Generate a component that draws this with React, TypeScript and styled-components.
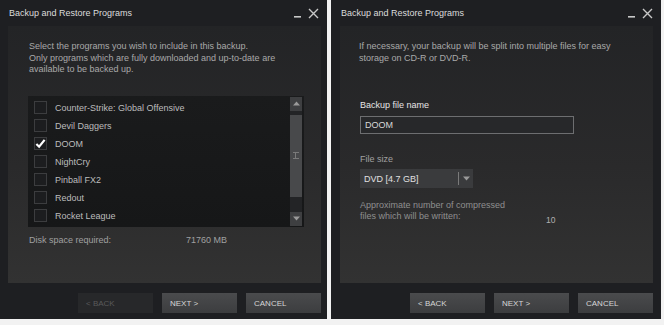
import styled, { createGlobalStyle } from "styled-components";

const GlobalStyle = createGlobalStyle`
  html, body {
    margin: 0;
    padding: 0;
    background: #f2f2f2;
    font-family: "Liberation Sans", Arial, sans-serif;
  }
`;

const games = [
  { name: "Counter-Strike: Global Offensive", checked: false },
  { name: "Devil Daggers", checked: false },
  { name: "DOOM", checked: true },
  { name: "NightCry", checked: false },
  { name: "Pinball FX2", checked: false },
  { name: "Redout", checked: false },
  { name: "Rocket League", checked: false },
];

const WindowControls = () => (
  <Controls>
    <svg width="10" height="10" viewBox="0 0 10 10">
      <rect x="1" y="8" width="7" height="1.6" fill="#c8c8c8" />
    </svg>
    <svg width="11" height="11" viewBox="0 0 11 11">
      <path d="M1 1 L10 10 M10 1 L1 10" stroke="#c8c8c8" strokeWidth="1.4" />
    </svg>
  </Controls>
);

const Check = () => (
  <svg width="11" height="11" viewBox="0 0 12 12">
    <path d="M1.5 6.5 L4.5 9.5 L10.5 2" stroke="#ffffff" strokeWidth="2.4" fill="none" />
  </svg>
);

const Arrow = ({ down }: { down?: boolean }) => (
  <svg width="7" height="5" viewBox="0 0 7 5">
    <path d={down ? "M0 0.5 L7 0.5 L3.5 4.5 Z" : "M0 4.5 L7 4.5 L3.5 0.5 Z"} fill="#9a9a9a" />
  </svg>
);

export default function App() {
  return (
    <Page>
      <GlobalStyle />
      <Window $width={327}>
        <TitleBar $pad={9}>
          <Title>Backup and Restore Programs</Title>
          <WindowControls />
        </TitleBar>
        <Panel $left={8} $right={6}>
          <Description $top={15} $pad={21}>
            Select the programs you wish to include in this backup.
            <br />
            Only programs which are fully downloaded and up-to-date are
            <br />
            available to be backed up.
          </Description>
          <ListBox>
            <Rows>
              {games.map((g) => (
                <Row key={g.name}>
                  <Box>{g.checked && <Check />}</Box>
                  <RowText>{g.name}</RowText>
                </Row>
              ))}
            </Rows>
            <ScrollBar>
              <ScrollButton>
                <Arrow />
              </ScrollButton>
              <Track>
                <Thumb>
                  <Grip />
                </Thumb>
              </Track>
              <ScrollButton>
                <Arrow down />
              </ScrollButton>
            </ScrollBar>
          </ListBox>
          <DiskRow>
            <DiskLabel>Disk space required:</DiskLabel>
            <span>71760 MB</span>
          </DiskRow>
        </Panel>
        <Footer $right={6}>
          <Button disabled>&lt; BACK</Button>
          <Button>NEXT &gt;</Button>
          <Button>CANCEL</Button>
        </Footer>
      </Window>

      <Window $width={330}>
        <TitleBar $pad={10}>
          <Title>Backup and Restore Programs</Title>
          <WindowControls />
        </TitleBar>
        <Panel $left={9} $right={8}>
          <Description $top={15} $pad={19}>
            If necessary, your backup will be split into multiple files for easy
            <br />
            storage on CD-R or DVD-R.
          </Description>
          <Form>
            <FieldLabel>Backup file name</FieldLabel>
            <TextInput>DOOM</TextInput>
            <SubLabel>File size</SubLabel>
            <Select>
              <SelectValue>DVD [4.7 GB]</SelectValue>
              <SelectArrow>
                <Arrow down />
              </SelectArrow>
            </Select>
            <Estimate>
              <EstimateText>
                Approximate number of compressed
                <br />
                files which will be written:
              </EstimateText>
              <EstimateValue>10</EstimateValue>
            </Estimate>
          </Form>
        </Panel>
        <Footer $right={8}>
          <Button>&lt; BACK</Button>
          <Button>NEXT &gt;</Button>
          <Button>CANCEL</Button>
        </Footer>
      </Window>
    </Page>
  );
}

const Page = styled.div`
  display: flex;
  gap: 4px;
  width: 664px;
  height: 325px;
`;

const Window = styled.div<{ $width: number }>`
  display: flex;
  flex-direction: column;
  width: ${({ $width }) => $width}px;
  height: 319px;
  background: #1e1f22;
  box-sizing: border-box;
`;

const TitleBar = styled.div<{ $pad: number }>`
  display: flex;
  align-items: center;
  justify-content: space-between;
  height: 26px;
  padding: 0 8px 0 ${({ $pad }) => $pad}px;
  flex-shrink: 0;
`;

const Title = styled.span`
  color: #dcdcdc;
  font-size: 9px;
`;

const Controls = styled.div`
  display: flex;
  align-items: center;
  gap: 5px;
`;

const Panel = styled.div<{ $left: number; $right: number }>`
  display: flex;
  flex-direction: column;
  height: 257px;
  margin: 0 ${({ $right }) => $right}px 0 ${({ $left }) => $left}px;
  background: linear-gradient(to bottom, #232426 0%, #2a2a2b 55%, #323232 100%);
  flex-shrink: 0;
`;

const Description = styled.div<{ $top: number; $pad: number }>`
  padding: ${({ $top }) => $top}px 0 0 ${({ $pad }) => $pad}px;
  color: #a9a9a9;
  font-size: 9px;
  line-height: 11.5px;
`;

const ListBox = styled.div`
  display: flex;
  margin: 20px 0 0 20px;
  width: 276px;
  height: 131px;
  background: linear-gradient(to bottom, #1a1b1c, #161718);
  box-sizing: border-box;
  padding: 1px 2px 1px 0;
`;

const Rows = styled.div`
  flex: 1;
  padding: 2px 0 0 6px;
`;

const Row = styled.div`
  display: flex;
  align-items: center;
  gap: 8px;
  height: 18px;
`;

const Box = styled.div`
  display: flex;
  align-items: center;
  justify-content: center;
  width: 11px;
  height: 11px;
  border: 1px solid #3c3d3f;
  background: #1c1d1f;
`;

const RowText = styled.span`
  color: #bcbcbc;
  font-size: 9px;
`;

const ScrollBar = styled.div`
  display: flex;
  flex-direction: column;
  width: 12px;
  background: #232426;
`;

const ScrollButton = styled.div`
  display: flex;
  align-items: center;
  justify-content: center;
  height: 14px;
  background: #3e3f41;
`;

const Track = styled.div`
  flex: 1;
  padding: 4px 0 15px;
`;

const Thumb = styled.div`
  display: flex;
  align-items: center;
  justify-content: center;
  height: 100%;
  background: #48494b;
`;

const Grip = styled.div`
  width: 6px;
  height: 5px;
  border-top: 1px solid #7a7a7a;
  border-bottom: 1px solid #7a7a7a;
  background: linear-gradient(to right, transparent 2px, #7a7a7a 2px, #7a7a7a 3px, transparent 3px);
`;

const DiskRow = styled.div`
  display: flex;
  padding: 8px 0 0 21px;
  color: #a0a0a0;
  font-size: 9px;
`;

const DiskLabel = styled.span`
  width: 157px;
`;

const Footer = styled.div<{ $right: number }>`
  display: flex;
  justify-content: flex-end;
  gap: 9px;
  padding: 10px ${({ $right }) => $right}px 0 0;
`;

const Button = styled.button`
  width: 75px;
  height: 20px;
  padding: 0 0 0 8px;
  border: none;
  text-align: left;
  font-family: "Liberation Sans", Arial, sans-serif;
  font-size: 8px;
  color: #d6d6d6;
  background: linear-gradient(to bottom, #4a4b4d, #3c3d3f);

  &:disabled {
    color: #5a5a5a;
    background: #27282a;
  }
`;

const Form = styled.div`
  display: flex;
  flex-direction: column;
  align-items: flex-start;
  padding: 36px 0 0 20px;
`;

const FieldLabel = styled.div`
  color: #e6e6e6;
  font-size: 9px;
`;

const TextInput = styled.div`
  display: flex;
  align-items: center;
  width: 214px;
  height: 18px;
  margin-top: 6px;
  padding-left: 4px;
  box-sizing: border-box;
  border: 1px solid #6d6e70;
  background: #27282a;
  color: #d8d8d8;
  font-size: 9px;
`;

const SubLabel = styled.div`
  margin-top: 20px;
  color: #a0a0a0;
  font-size: 9px;
`;

const Select = styled.div`
  display: flex;
  width: 113px;
  height: 19px;
  margin-top: 5px;
  background: #3a3b3d;
`;

const SelectValue = styled.div`
  flex: 1;
  display: flex;
  align-items: center;
  padding-left: 4px;
  color: #e0e0e0;
  font-size: 9px;
  border-right: 1px solid #7a7a7a;
  margin: 3px 0;
`;

const SelectArrow = styled.div`
  display: flex;
  align-items: center;
  justify-content: center;
  width: 14px;
`;

const Estimate = styled.div`
  display: flex;
  align-items: flex-end;
  margin-top: 12px;
  color: #8f8f8f;
  font-size: 9px;
  line-height: 10.5px;
`;

const EstimateText = styled.div`
  width: 186px;
`;

const EstimateValue = styled.span`
  color: #b0b0b0;
  font-size: 8.5px;
  margin-bottom: -4px;
`;
